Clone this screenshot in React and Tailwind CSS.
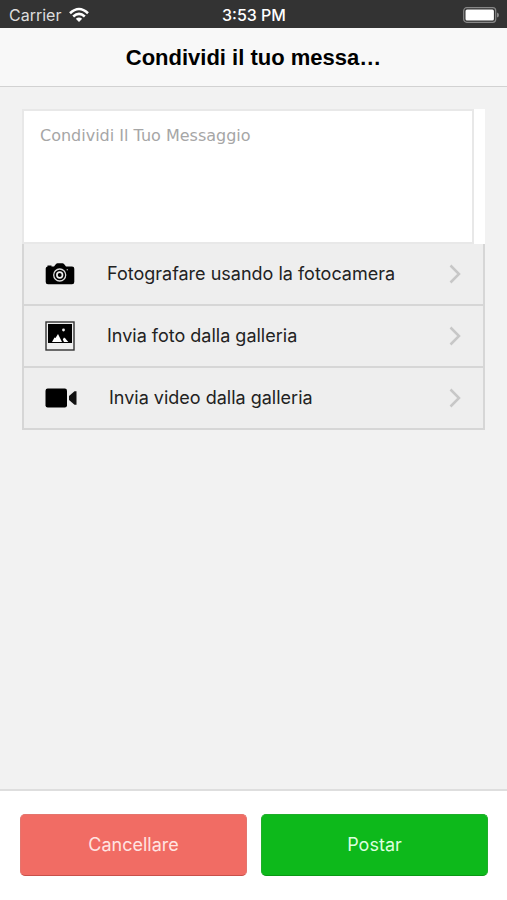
import React from "react";

const CameraIcon = () => (
  <svg className="w-[30px] h-6" viewBox="0 0 30 24" aria-hidden="true">
    <path
      d="M2.500 4.500V3.500h4v1h2.500l2-2.400q.6-.8 1.500-.8h5q.9 0 1.500.8l2 2.400H27q2.300 0 2.300 2.300v13.200q0 2.300-2.300 2.300H3q-2.300 0-2.300-2.300V6.500q0-1.600 1.800-2z"
      fill="#000"
    />
    <circle cx="14.700" cy="13" r="6" fill="none" stroke="#ddd" strokeWidth="1.300" />
    <circle cx="14.700" cy="13" r="2.800" fill="none" stroke="#eee" strokeWidth="1.700" />
    <circle cx="22.300" cy="7.800" r=".8" fill="#aaa" />
  </svg>
);

const PictureIcon = () => (
  <svg className="w-[30px] h-[30px]" viewBox="0 0 30 30" aria-hidden="true">
    <rect x="1" y="1" width="28" height="28" fill="#eee" stroke="#333" strokeWidth="1.400" />
    <rect x="3" y="3" width="24" height="19" fill="#000" />
    <path d="M7 21l2.500-4.500 1 .5 2.500-4 4 8z" fill="#fff" />
    <path d="M17.800 18.500l1.200-2 1 .8 3.300 3.700h-4.300z" fill="#fff" />
    <circle cx="18.500" cy="9" r="1.400" fill="#eee" />
  </svg>
);

const VideoIcon = () => (
  <svg className="w-8 h-5" viewBox="0 0 32 20" aria-hidden="true">
    <rect x=".5" y=".5" width="21.500" height="19" rx="2.200" fill="#000" />
    <path d="M24 8l5.500-4.700H31.500v13.400H29.500L24 12z" fill="#111" />
  </svg>
);

const ChevronIcon = () => (
  <svg className="w-3 h-5" viewBox="0 0 12 20" aria-hidden="true">
    <path d="M1.500 1.500L10 10l-8.500 8.500" fill="none" stroke="#c7c7c7" strokeWidth="2.500" />
  </svg>
);

const options = [
  { label: "Fotografare usando la fotocamera", Icon: CameraIcon },
  { label: "Invia foto dalla galleria", Icon: PictureIcon },
  { label: "Invia video dalla galleria", Icon: VideoIcon },
];

const StatusBar = () => (
  <div className="grid grid-cols-3 items-center h-7 pt-px pl-[9px] pr-2 bg-[#333] text-white text-base">
    <div className="flex items-center gap-2 text-[#ddd]">
      <span>Carrier</span>
      <svg className="w-5 h-4" viewBox="0 0 20 16" aria-hidden="true">
        <g fill="none" stroke="#fff" strokeWidth="2.600">
          <path d="M1 6.200Q10-2.200 19 6.200" />
          <path d="M4.200 9.500Q10 4.200 15.800 9.500" />
        </g>
        <path d="M6.800 11.800Q10 9 13.200 11.800L10 15z" fill="#fff" />
      </svg>
    </div>
    <span className="text-center font-medium">3:53 PM</span>
    <svg className="w-9 h-4 justify-self-end" viewBox="0 0 36 16" aria-hidden="true">
      <rect x=".7" y=".7" width="32" height="14.600" rx="3" fill="none" stroke="#888" strokeWidth="1.200" />
      <rect x="2.500" y="2.500" width="28.400" height="11" rx="1.500" fill="#fff" />
      <path d="M34 5.500q2 .5 2 2.500t-2 2.500z" fill="#888" />
    </svg>
  </div>
);

const App = () => {
  return (
    <div className="flex flex-col min-h-screen bg-[#f2f2f2] font-['Inter',sans-serif] text-black">
      <StatusBar />
      <header className="flex items-center justify-center h-[59px] bg-[#f8f8f8] border-b border-[#d2d2d2]">
        <h1 className="font-['Liberation_Sans',sans-serif] text-[22px] font-bold">
          Condividi il tuo messa…
        </h1>
      </header>

      <main className="grow px-[22px] pt-[22px]">
        <div className="pr-[11px] bg-white">
          <textarea
            aria-label="Condividi Il Tuo Messaggio"
            placeholder="Condividi Il Tuo Messaggio"
            className="block w-full h-[135px] px-4 py-[13px] resize-none border-2 border-[#e8e8e8] bg-white font-['DejaVu_Sans',sans-serif] text-base outline-none placeholder:text-[#a6a6a6]"
          />
        </div>
        <ul className="border-x-2 border-[#d6d6d6] bg-[#eee]">
          {options.map(({ label, Icon }) => (
            <li key={label} className="border-b-2 border-[#d6d6d6]">
              <button className="flex items-center w-full h-[60px] pl-[21px] pr-[22px] text-left text-lg text-[#222]">
                <Icon />
                <span className="grow pl-8">{label}</span>
                <ChevronIcon />
              </button>
            </li>
          ))}
        </ul>
      </main>

      <footer className="flex gap-[14px] pl-5 pr-[19px] pt-[23px] pb-6 bg-white border-t-2 border-[#dedede]">
        <button className="flex-1 h-[62px] rounded-[5px] bg-[#f16c64] border border-t-[#e4756e] border-x-[#e4756e] border-b-[#c8504a] text-lg text-[#ffe4e1]">
          Cancellare
        </button>
        <button className="flex-1 h-[62px] rounded-[5px] bg-[#0db91b] border border-t-[#1fae2a] border-x-[#1fae2a] border-b-[#0a9815] text-lg text-[#dcffdf]">
          Postar
        </button>
      </footer>
    </div>
  );
};

export default App;
